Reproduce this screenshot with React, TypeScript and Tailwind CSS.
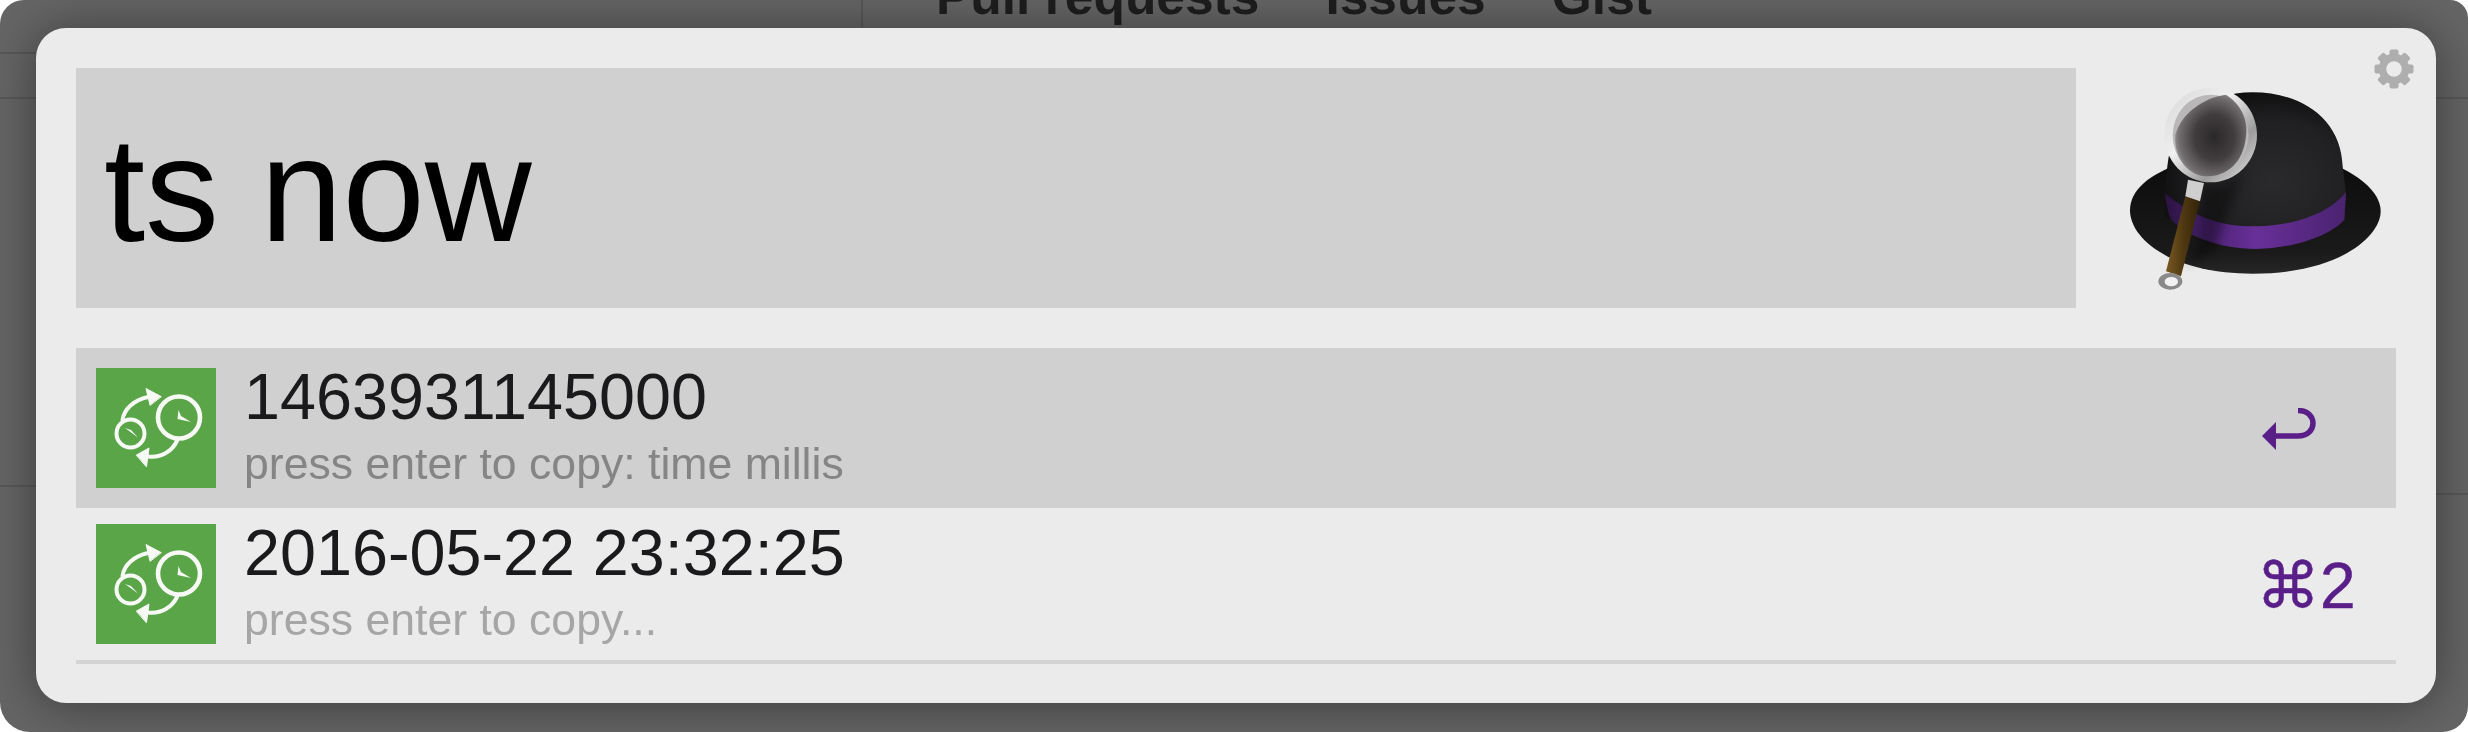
const F = '"Liberation Sans", Arial, sans-serif';
const W = '#f7f9f5';

function ClockIcon({ top }: { top: string }) {
  return (
    <div className={`w-[120px] h-[120px] bg-[#5aa548] shrink-0 ${top}`}>
      <svg viewBox="0 0 120 120" className="w-full h-full" fill="none" stroke={W} strokeLinecap="round" strokeLinejoin="round">
        <circle cx="83" cy="49.5" r="21" strokeWidth="4.6" />
        <circle cx="34.5" cy="65.5" r="14" strokeWidth="4" />
        <path d="M26.5 52 C28 41 38 32 52 29" strokeWidth="4" />
        <path d="M65 28.5 L50 20.5 L54 37 Z" fill={W} stroke={W} strokeWidth="1" />
        <path d="M81 73 C76 83 66 90 52 88.5" strokeWidth="4" />
        <path d="M40.5 87 L53 80 L50.5 98.5 Z" fill={W} stroke={W} strokeWidth="1" />
        <path d="M82.5 42 L81.5 51 L95 54 L85 48 Z" fill={W} stroke="none" />
        <path d="M29 60 L42 69.5 L35 62 Z" fill={W} stroke="none" />
      </svg>
    </div>
  );
}

function Gear() {
  const teeth = [0, 45, 90, 135, 180, 225, 270, 315];
  return (
    <svg viewBox="0 0 40 40" className="absolute right-[22px] top-[21px] w-[40px] h-[40px]">
      {teeth.map((a) => (
        <rect key={a} x="15.5" y="0.5" width="9" height="9" rx="2" fill="#aeaeae" transform={`rotate(${a} 20 20)`} />
      ))}
      <circle cx="20" cy="20" r="11.5" fill="none" stroke="#aeaeae" strokeWidth="7.5" />
    </svg>
  );
}

function Hat() {
  return (
    <svg viewBox="260 190 780 630" className="w-[260px] h-[210px] shrink-0">
      <defs>
        <filter id="soft" x="-30%" y="-30%" width="160%" height="160%">
          <feGaussianBlur stdDeviation="14" />
        </filter>
        <radialGradient id="crown" cx="0.6" cy="0.62" r="0.65">
          <stop offset="0" stopColor="#2a292b" />
          <stop offset="0.65" stopColor="#201f21" />
          <stop offset="1" stopColor="#0e0e0f" />
        </radialGradient>
        <linearGradient id="brim" x1="0" y1="0" x2="0" y2="1">
          <stop offset="0" stopColor="#0d0d0e" />
          <stop offset="0.8" stopColor="#1a1a1b" />
          <stop offset="1" stopColor="#262627" />
        </linearGradient>
        <linearGradient id="band" x1="0" y1="0" x2="1" y2="0">
          <stop offset="0" stopColor="#2a1340" />
          <stop offset="0.25" stopColor="#4c2373" />
          <stop offset="0.5" stopColor="#682f99" />
          <stop offset="1" stopColor="#4a2370" />
        </linearGradient>
        <radialGradient id="lens" cx="0.55" cy="0.52" r="0.62">
          <stop offset="0" stopColor="#2b2829" />
          <stop offset="0.45" stopColor="#413d3e" />
          <stop offset="0.8" stopColor="#726e6f" />
          <stop offset="1" stopColor="#aeabac" />
        </radialGradient>
        <linearGradient id="ring" x1="0" y1="0" x2="1" y2="1">
          <stop offset="0" stopColor="#d6d6d6" />
          <stop offset="0.4" stopColor="#f0f0f0" />
          <stop offset="0.7" stopColor="#9c9c9c" />
          <stop offset="1" stopColor="#e8e8e8" />
        </linearGradient>
        <linearGradient id="handle" x1="0" y1="0" x2="1" y2="0">
          <stop offset="0" stopColor="#7a5a22" />
          <stop offset="0.5" stopColor="#503811" />
          <stop offset="1" stopColor="#33230b" />
        </linearGradient>
      </defs>
      <path d="M272 572 C272 510 330 470 395 442 L912 448 C975 480 1024 525 1024 575 C1024 650 900 762 640 762 C400 762 272 660 272 572 Z" fill="url(#brim)" />
      <path d="M384 440 C400 300 500 218 640 218 C790 218 905 300 910 440 L920 520 L915 600 C820 655 560 660 460 640 L376 590 L376 520 Z" fill="url(#crown)" />
      <path d="M920 518 C870 580 770 618 650 620 C560 622 470 600 376 520 C380 550 385 570 392 595 C430 645 540 688 650 688 C760 686 870 650 915 600 Z" fill="url(#band)" />
      <path d="M620 440 C590 490 540 505 495 495 L475 680 L440 740 L520 700 Z" fill="#000" opacity="0.35" filter="url(#soft)" />
      <path d="M438 530 L482 545 L425 770 L380 755 Z" fill="url(#handle)" />
      <path d="M446 480 L494 490 L482 545 L438 530 Z" fill="#cfcfcf" />
      <ellipse cx="393" cy="785" rx="36" ry="25" fill="#8a8a8a" />
      <ellipse cx="396" cy="786" rx="20" ry="14" fill="#f2f2f2" />
      <ellipse cx="514" cy="346" rx="139" ry="142" fill="url(#ring)" />
      <ellipse cx="514" cy="347" rx="114" ry="122" fill="#b9b7b8" />
      <path d="M408 345 C428 280 490 235 560 225 C602 250 628 300 620 350 C612 432 560 470 505 470 C450 470 403 420 408 345 Z" fill="url(#lens)" />
    </svg>
  );
}

function Line({ cls }: { cls: string }) {
  return <div className={`absolute bg-[#585858] ${cls}`} />;
}

export default function App() {
  return (
    <div className="w-[2468px] h-[732px] bg-white overflow-hidden" style={{ fontFamily: F }}>
      <div className="relative w-[2468px] h-[732px] rounded-tl-[24px] rounded-tr-[18px] rounded-bl-[30px] rounded-br-[26px] overflow-hidden bg-[#656565] pt-[28px] pl-[36px] blur-[0.6px]">
        <Line cls="left-0 top-[52px] w-[36px] h-[2px]" />
        <Line cls="left-0 top-[97px] w-full h-[2px]" />
        <Line cls="left-0 top-[485px] w-[36px] h-[2px]" />
        <Line cls="right-0 top-[493px] w-[36px] h-[2px]" />
        <Line cls="left-[861px] top-0 w-[2px] h-[30px]" />
        <div className="absolute left-[936px] top-[-29px] flex gap-[66px] text-[51.5px] leading-none font-bold text-[#1e1e1e]">
          <span>Pull requests</span>
          <span>Issues</span>
          <span>Gist</span>
        </div>
        <div className="relative w-[2400px] h-[675px] rounded-[30px] bg-[#ebebeb] shadow-[0_2px_50px_rgba(0,0,0,0.42)] px-[40px] pt-[40px]">
          <Gear />
          <div className="flex">
            <div className="w-[2000px] h-[240px] bg-[#d0d0d0] flex items-center pl-[28px] pt-[3px] text-[148px] text-black">ts now</div>
            <div className="ml-[50px] mt-[15px]">
              <Hat />
            </div>
          </div>
          <div className="mt-[40px]">
            <div className="flex items-start h-[160px] pl-[20px] bg-[#d0d0d0]">
              <ClockIcon top="mt-[20px]" />
              <div className="ml-[28px] pt-[12px] flex-1 flex flex-col">
                <div className="text-[64.7px] leading-[74px] text-[#1a1a1c]">1463931145000</div>
                <div className="mt-[7px] text-[44.6px] leading-[46px] text-[#858585]">press enter to copy: time millis</div>
              </div>
              <div className="w-[135px] pt-[60px] shrink-0">
                <svg viewBox="0 0 60 44" className="w-[60px] h-[44px]" fill="none">
                  <path d="M14 28 H37 C57 28 57 2.5 37 2.5" stroke="#591e88" strokeWidth="5.5" />
                  <path d="M1 28 L15 14 V42 Z" fill="#591e88" />
                </svg>
              </div>
            </div>
            <div className="flex items-start h-[156px] pl-[20px] border-b-[4px] border-[#d4d4d4]">
              <ClockIcon top="mt-[16px]" />
              <div className="ml-[28px] pt-[8px] flex-1 flex flex-col">
                <div className="text-[64.7px] leading-[74px] text-[#1a1a1c]">2016-05-22 23:32:25</div>
                <div className="mt-[7px] text-[44.6px] leading-[46px] text-[#a6a6a6]">press enter to copy...</div>
              </div>
              <div className="w-[135px] pt-[46px] shrink-0">
                <span className="block -ml-[5px] text-[64px] leading-none text-[#591e88] [-webkit-text-stroke:0.5px_#591e88]" style={{ fontFamily: '"Liberation Sans", "DejaVu Sans", sans-serif' }}>⌘2</span>
              </div>
            </div>
          </div>
        </div>
      </div>
    </div>
  );
}
